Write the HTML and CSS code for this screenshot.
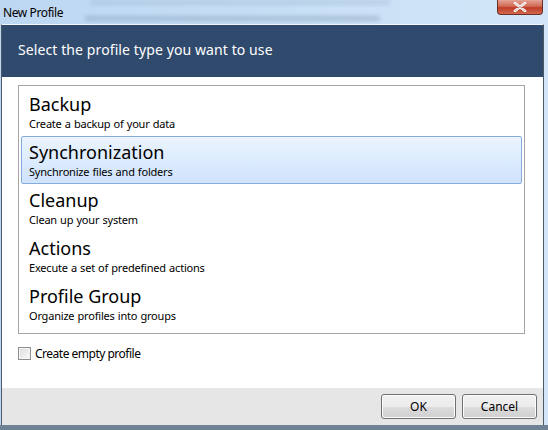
FILE: index.html
```html
<!DOCTYPE html>
<html>
<head>
<meta charset="utf-8">
<link rel="stylesheet" href="styles.css">
</head>
<body>
<div class="window">
  <div class="titlebar">
    <div class="blur blur1"></div>
    <div class="blur blur2"></div>
    <span class="title">New Profile</span>
    <div class="close"><svg width="16" height="10" viewBox="0 0 16 10"><path d="M3 1 L13 9 M13 1 L3 9" stroke="#fff" stroke-width="2.6" stroke-linecap="round"/><path d="M3 1 L13 9 M13 1 L3 9" stroke="#6b2a1f" stroke-width="0.6" fill="none" opacity="0.5"/></svg></div>
  </div>
  <div class="client">
    <div class="header">Select the profile type you want to use</div>
    <div class="content">
      <div class="list">
        <div class="item"><div class="item-title">Backup</div><div class="item-desc">Create a backup of your data</div></div>
        <div class="item selected"><div class="item-title">Synchronization</div><div class="item-desc">Synchronize files and folders</div></div>
        <div class="item"><div class="item-title">Cleanup</div><div class="item-desc">Clean up your system</div></div>
        <div class="item"><div class="item-title">Actions</div><div class="item-desc">Execute a set of predefined actions</div></div>
        <div class="item"><div class="item-title">Profile Group</div><div class="item-desc">Organize profiles into groups</div></div>
      </div>
      <label class="check"><span class="box"></span>Create empty profile</label>
    </div>
    <div class="footer">
      <button class="btn">OK</button>
      <button class="btn">Cancel</button>
    </div>
  </div>
</div>
</body>
</html>
```
FILE: styles.css
```css
html, body {
  margin: 0;
  padding: 0;
}
body {
  width: 548px;
  height: 430px;
  overflow: hidden;
  font-family: "Noto Sans", "Open Sans", sans-serif;
  background: #c4dcf4;
}
.window {
  width: 548px;
  height: 430px;
  display: flex;
  flex-direction: column;
  background: linear-gradient(90deg, #bdd7f2 0%, #c9e0f6 60%, #d3e6f8 100%);
  border-bottom: 5px solid #6f8194;
  box-sizing: border-box;
}
.titlebar {
  position: relative;
  height: 24px;
  flex: none;
  display: flex;
  align-items: flex-start;
  justify-content: space-between;
}
.blur {
  position: absolute;
  height: 5px;
  background: #8ea6c0;
  filter: blur(2px);
  opacity: 0.55;
}
.blur1 { left: 90px; top: 0px; width: 300px; opacity: 0.3; }
.blur2 { left: 85px; top: 16px; width: 295px; }
.title {
  position: relative;
  margin: 4px 0 0 3px;
  font-size: 12px;
  letter-spacing: -0.4px;
  color: #000;
  font-family: "Noto Sans", sans-serif;
}
.close {
  position: relative;
  width: 46px;
  height: 15px;
  margin-right: 5px;
  box-sizing: border-box;
  border: 1px solid #6e2f27;
  border-top: none;
  border-radius: 0 0 4px 4px;
  background: linear-gradient(#e5a496 0%, #d16a55 45%, #bf3d26 55%, #cf6a4f 100%);
  display: flex;
  align-items: center;
  justify-content: center;
}
.client {
  flex: 1;
  display: flex;
  flex-direction: column;
  margin: 0 4px 0 1px;
  border-left: 1px solid #4d5a68;
  border-right: 1px solid #4d5a68;
  border-top: 1px solid #f4f8fc;
  background: #fff;
}
.header {
  height: 52px;
  background: #304a6d;
  color: #fff;
  font-size: 14px;
  letter-spacing: 0.1px;
  padding-left: 16px;
  line-height: 50px;
  box-sizing: border-box;
}
.content {
  flex: 1;
  padding: 8px 18px 0 16px;
}
.list {
  border: 1px solid #a5a5a5;
  height: 249px;
  box-sizing: border-box;
  padding: 2px 2px;
}
.item {
  height: 48px;
  box-sizing: border-box;
  padding: 3px 0 0 7px;
  border: 1px solid transparent;
  border-radius: 2px;
}
.item.selected {
  background: linear-gradient(#ebf4fe, #cfe3fc);
  border-color: #84acdd;
}
.item-title {
  font-size: 18px;
  line-height: 24px;
  color: #000;
}
.item-desc {
  font-size: 11px;
  letter-spacing: -0.2px;
  word-spacing: 0.5px;
  line-height: 15px;
  color: #000;
}
.check {
  display: flex;
  align-items: center;
  margin-top: 11px;
  font-size: 12px;
  letter-spacing: -0.5px;
  color: #000;
}
.box {
  width: 11px;
  height: 11px;
  border: 1px solid #8e8f8f;
  background: linear-gradient(135deg, #dcdcdc, #fafafa);
  box-shadow: inset 0 0 0 1px #f4f4f4;
  margin-right: 4px;
}
.footer {
  height: 37px;
  background: #e6e6e6;
  display: flex;
  justify-content: flex-end;
  align-items: flex-start;
  gap: 6px;
  padding: 6px 6px 0 0;
  box-sizing: border-box;
}
.btn {
  width: 75px;
  height: 25px;
  border: 1px solid #707070;
  border-radius: 3px;
  background: linear-gradient(#f2f2f2 0%, #ebebeb 50%, #dddddd 51%, #cfcfcf 100%);
  box-shadow: inset 0 0 0 1px #fbfbfb;
  font-family: "Noto Sans", sans-serif;
  font-size: 12px;
  color: #000;
  padding: 0;
}
```
